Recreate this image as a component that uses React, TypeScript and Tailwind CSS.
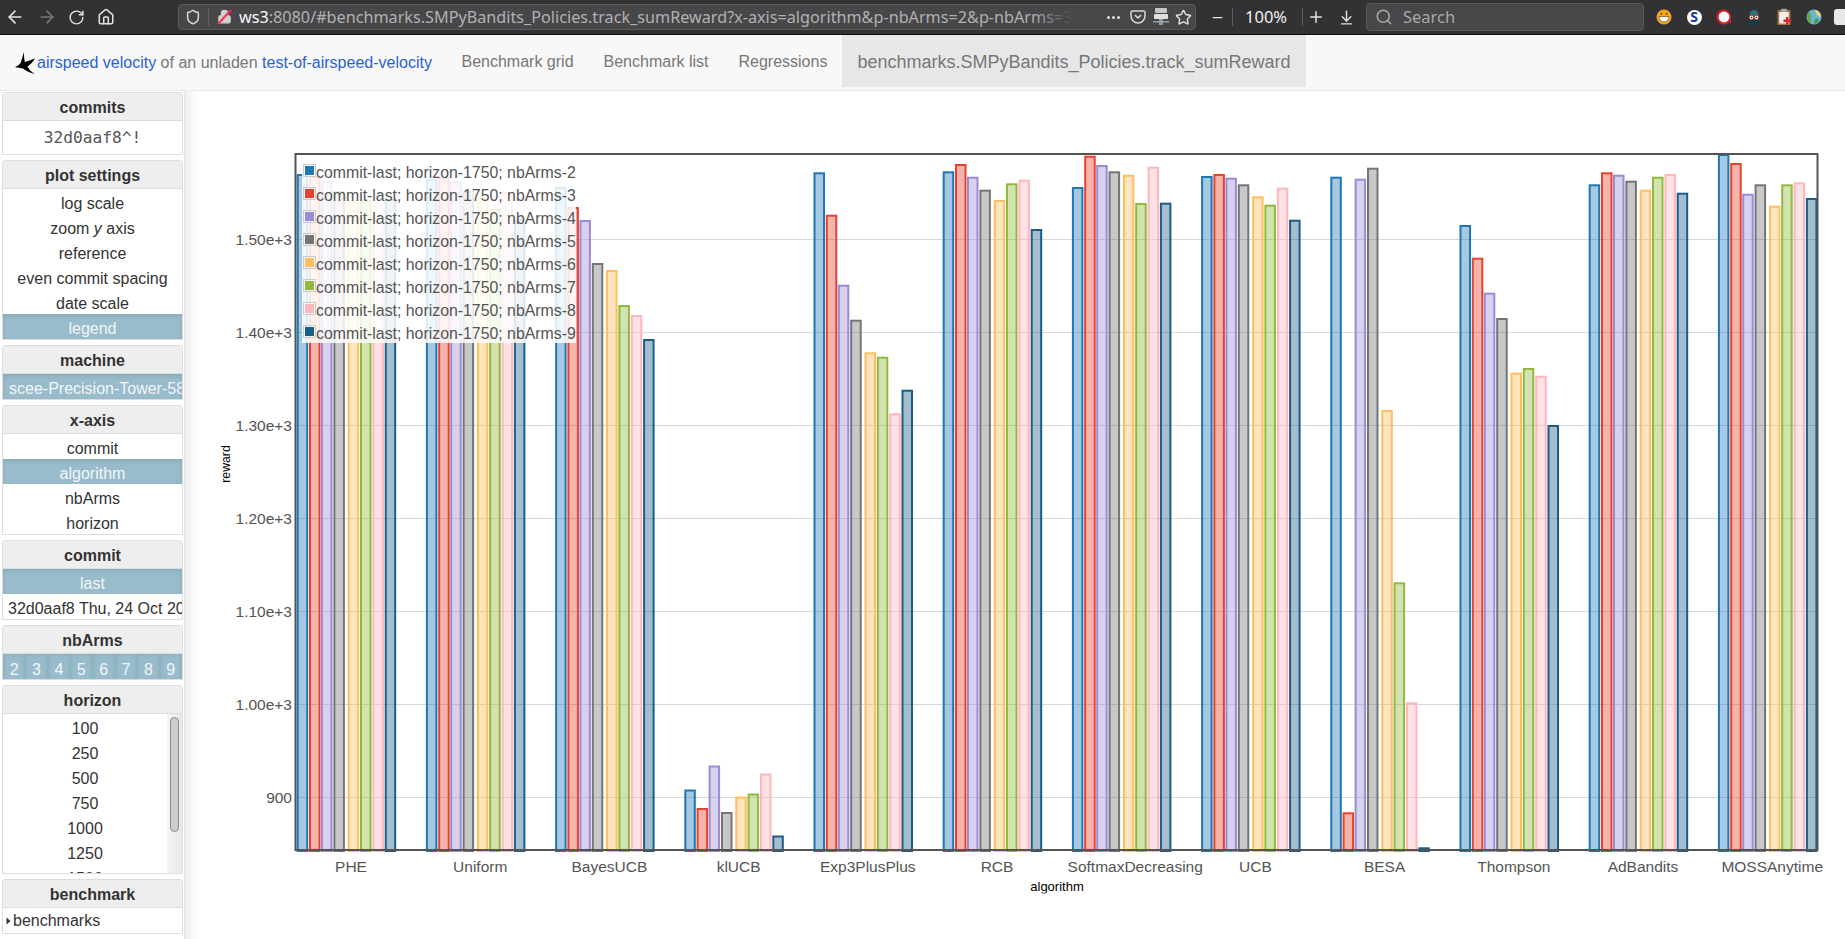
import React from "react";
import { ArrowLeft, ArrowRight, RotateCw, Home, Shield, Lock, Star, Minus, Plus, ArrowDownToLine, Search } from "lucide-react";

const COLORS = ["#1f77b4", "#e6432e", "#9b8bd4", "#757575", "#fdbf5f", "#8fba3d", "#ffb6bd", "#1b5d88"];
const OFFSETS = [0, 12.3, 24.3, 36.7, 51, 63.3, 75.7, 88];
const GROUPS: { name: string; tops: number[]; dx?: number }[] = [
  { name: "PHE", tops: [175, 177, 182, 192, 201, 201, 205.7, 200] },
  { name: "Uniform", tops: [180, 178, 182, 192, 198, 210, 193, 220] },
  { name: "BayesUCB", tops: [188, 208, 221, 264, 271, 306, 316, 340] },
  { name: "klUCB", tops: [790.5, 809, 766.5, 813, 797.5, 794.5, 774.5, 836.5] },
  { name: "Exp3PlusPlus", tops: [173.3, 215.7, 285.7, 320.7, 353.3, 357.7, 414.3, 390.7] },
  { name: "RCB", tops: [172.3, 165, 177.7, 190.7, 201, 184.3, 180.7, 230] },
  { name: "SoftmaxDecreasing", tops: [188, 156.7, 166, 172.3, 175.7, 204, 167.7, 203.7], dx: 9 },
  { name: "UCB", tops: [177, 175, 178.7, 185.3, 197.3, 205.7, 188.7, 220.7] },
  { name: "BESA", tops: [177.7, 813.3, 179.7, 168.7, 411, 583.3, 703.3, 848.3] },
  { name: "Thompson", tops: [226, 258.7, 293.7, 319, 373.7, 369, 376.7, 426] },
  { name: "AdBandits", tops: [185.3, 173.3, 175.7, 181.7, 190.7, 177.7, 175, 193.7] },
  { name: "MOSSAnytime", tops: [155, 164, 194.7, 185.3, 206.7, 185.3, 183.3, 199] },
];
const TICKS: [string, number][] = [
  ["1.50e+3", 239.5],
  ["1.40e+3", 332.5],
  ["1.30e+3", 425.5],
  ["1.20e+3", 518.5],
  ["1.10e+3", 611.5],
  ["1.00e+3", 704.5],
  ["900", 797.5],
];

function Panel({ title, children }: { title: string; children: React.ReactNode }) {
  return (
    <div className="border border-[#ddd] rounded-t-[3px] bg-white overflow-hidden shrink-0">
      <div className="box-border h-[28px] pt-[3px] border-b border-[#ddd] bg-[#eeeeee] flex items-center justify-center font-bold text-[#333] text-[16px]">
        {title}
      </div>
      {children}
    </div>
  );
}

function Item({ label, active }: { label: React.ReactNode; active?: boolean }) {
  return (
    <div
      className={
        active
          ? "box-border h-[25px] pt-[4px] flex items-center justify-center bg-[#98bccb] text-[#f2f6f8] shadow-[inset_0_2px_4px_rgba(0,0,0,0.1)] whitespace-nowrap overflow-hidden"
          : "box-border h-[25px] pt-[4px] flex items-center justify-center text-[#333] whitespace-nowrap overflow-hidden"
      }
    >
      {label}
    </div>
  );
}

function Bird() {
  return (
    <svg width="20" height="23" viewBox="0 0 20 23" className="shrink-0">
      <path
        d="M9 0 C9 4 9 7 10 10 C13 9 16 8 20 6.5 C18 10 15 13 12.5 14.5 C14 17 16 20 20 22 C15 21 11 19 8 16.5 C5.5 16 2.5 15.8 0 15 C3 14 5 12 6 10 C7 7 8 3 9 0 Z"
        fill="#000"
      />
    </svg>
  );
}

function ExtIcons() {
  return (
    <div className="flex items-center gap-[10px] ml-[10px] shrink-0">
      <svg width="20" height="20" viewBox="0 0 20 20">
        <circle cx="10" cy="10" r="7.5" fill="#f5a81c" />
        <path d="M5 9.5 H15 C15 13 13 15 10 15 C7 15 5 13 5 9.5 Z" fill="#fff" stroke="#7a4a08" strokeWidth="0.7" />
        <circle cx="7.3" cy="6.8" r="1" fill="#6b4105" />
        <circle cx="12.7" cy="6.8" r="1" fill="#6b4105" />
      </svg>
      <div className="w-[20px] h-[20px] flex items-center justify-center">
        <div className="w-[15px] h-[15px] rounded-full bg-white flex items-center justify-center text-[#0b3d91] text-[14px] font-bold leading-none">S</div>
      </div>
      <svg width="20" height="20" viewBox="0 0 20 20">
        <path d="M10 2.5 A7.5 7.5 0 1 0 15.5 15 L17 17 L17 10 A7.5 7.5 0 0 0 10 2.5 Z" fill="#d9201e" />
        <circle cx="10" cy="10" r="5.4" fill="#fff" />
      </svg>
      <svg width="20" height="20" viewBox="0 0 20 20">
        <path d="M3 18 C3 14 6 13 10 13 C14 13 17 14 17 18 Z" fill="#1b3a46" />
        <path d="M5.5 9 C5.5 5 7.5 3 10 3 C12.5 3 14.5 5 14.5 9 Z" fill="#2e6f7e" />
        <circle cx="7.5" cy="10.5" r="2.3" fill="#f2e7d8" stroke="#a8322a" strokeWidth="0.8" />
        <circle cx="12.5" cy="10.5" r="2.3" fill="#f2e7d8" stroke="#a8322a" strokeWidth="0.8" />
        <circle cx="7.5" cy="10.5" r="0.8" fill="#222" />
        <circle cx="12.5" cy="10.5" r="0.8" fill="#222" />
      </svg>
      <svg width="20" height="20" viewBox="0 0 20 20">
        <rect x="3.5" y="3" width="13" height="15" rx="1" fill="#a5733a" />
        <rect x="5.2" y="5" width="9.6" height="11.5" fill="#f4f1ea" />
        <rect x="7" y="1.8" width="6" height="3" rx="0.8" fill="#a8a8a8" />
        <path d="M12 10 h2.4 v2.6 h2.6 v2.4 h-2.6 v2.6 h-2.4 v-2.6 h-2.6 v-2.4 h2.6 Z" fill="#e3202e" />
      </svg>
      <svg width="20" height="20" viewBox="0 0 20 20">
        <circle cx="10" cy="10" r="7.5" fill="#62b6dc" />
        <path d="M4 6 C7 5 8 8 7 10 C6 13 8 15 7 17 C4 15 2 10 4 6 Z" fill="#6aa83c" />
        <path d="M11 3 C14 3 17 6 17 10 C15 10 13 8 12 7 Z" fill="#e9d26a" />
        <path d="M11 12 C13 11 15 12 15 14 C13 17 11 17 10 17 Z" fill="#4f9a3e" />
      </svg>
      <div className="w-[20px] h-[16px] rounded-[3px] bg-[#e8e8e8] shrink-0" />
    </div>
  );
}

function Toolbar() {
  return (
    <div className="box-border h-[35px] shrink-0 bg-[#323234] border-b border-[#0c0c0d] flex items-center overflow-hidden font-['Noto_Sans',sans-serif]">
      <div className="w-[178px] shrink-0 flex items-center">
        <ArrowLeft size={20} color="#e2e2e3" className="ml-[5px]" />
        <ArrowRight size={20} color="#77777a" className="ml-[12px]" />
        <RotateCw size={17} color="#e2e2e3" className="ml-[11px]" />
        <Home size={18} color="#e2e2e3" className="ml-[12px]" />
      </div>
      <div className="box-border w-[1018px] h-[26px] shrink-0 rounded-[4px] bg-[#474749] border border-[#5a5a5c] flex items-center relative">
        <Shield size={16} color="#d0d0d1" strokeWidth={2.4} className="ml-[6px] shrink-0" />
        <div className="w-px h-[18px] bg-[#5f5f61] ml-[7px] shrink-0" />
        <div className="relative ml-[8px] w-[16px] h-[16px] shrink-0">
          <Lock size={15} color="#d0d0d1" fill="#d0d0d1" />
          <svg width="16" height="16" viewBox="0 0 16 16" className="absolute left-0 top-0">
            <path d="M1 15 L14 1" stroke="#ff2d55" strokeWidth="2" />
          </svg>
        </div>
        <div className="ml-[6px] w-[834px] overflow-hidden whitespace-nowrap text-[16.2px] text-[#b1b1b3] relative shrink-0">
          <span className="text-[#f9f9fa]">ws3</span>:8080/#benchmarks.SMPyBandits_Policies.track_sumReward?x-axis=algorithm&amp;p-nbArms=2&amp;p-nbArms=3&amp;p-nbArms=4
          <div className="absolute right-0 top-0 bottom-0 w-[40px] bg-gradient-to-r from-transparent to-[#474749]" />
        </div>
        <div className="ml-auto flex items-center pr-[3px]">
          <div className="flex gap-[2px] mr-[10px]">
            <div className="w-[3px] h-[3px] rounded-full bg-[#e2e2e3]" />
            <div className="w-[3px] h-[3px] rounded-full bg-[#e2e2e3]" />
            <div className="w-[3px] h-[3px] rounded-full bg-[#e2e2e3]" />
          </div>
          <svg width="16" height="16" viewBox="0 0 16 16" className="mr-[6px]">
            <path d="M2.5 2 H13.5 Q15 2 15 3.5 V7 A7 7 0 0 1 1 7 V3.5 Q1 2 2.5 2 Z" fill="none" stroke="#d8d8d9" strokeWidth="1.5" />
            <path d="M5 6.2 L8 9 L11 6.2" fill="none" stroke="#d8d8d9" strokeWidth="1.6" />
          </svg>
          <svg width="18" height="20" viewBox="0 0 18 20" className="mr-[5px]">
            <rect x="3" y="1" width="12" height="5" rx="1" fill="#c8c8ca" />
            <rect x="2" y="7" width="14" height="5" rx="1" fill="#e0e0e2" />
            <rect x="1" y="14" width="16" height="1.6" fill="#7fa0b8" />
            <rect x="7" y="12" width="4" height="6" fill="#9a9a9c" />
          </svg>
          <Star size={17} color="#e2e2e3" />
        </div>
      </div>
      <Minus size={15} color="#e2e2e3" className="ml-[14px] shrink-0" />
      <div className="w-px h-[18px] bg-[#5f5f61] ml-[7px] shrink-0" />
      <div className="ml-[12px] text-[16.5px] text-[#f0f0f0] w-[45px] shrink-0 whitespace-nowrap">100%</div>
      <div className="w-px h-[18px] bg-[#5f5f61] ml-[12px] shrink-0" />
      <Plus size={18} color="#e2e2e3" className="ml-[4px] shrink-0" />
      <ArrowDownToLine size={17} color="#e2e2e3" className="ml-[13px] shrink-0" />
      <div className="box-border ml-[11px] w-[278px] h-[28px] shrink-0 rounded-[4px] bg-[#474749] border border-[#5a5a5c] flex items-center">
        <Search size={18} color="#a8a8aa" className="ml-[8px]" />
        <span className="ml-[10px] text-[16.5px] text-[#a8a8aa]">Search</span>
      </div>
      <ExtIcons />
    </div>
  );
}

function Nav() {
  return (
    <div className="box-border h-[56px] shrink-0 bg-[#f8f8f8] border-b border-[#e7e7e7] flex items-start text-[16px] text-[#777] overflow-hidden">
      <div className="w-[446.5px] h-[55px] shrink-0 flex items-center pl-[15px] pt-[1px]">
        <Bird />
        <span className="ml-[2px] whitespace-nowrap">
          <span className="text-[#2b5fd6]">airspeed velocity</span> of an unladen{" "}
          <span className="text-[#2b5fd6]">test-of-airspeed-velocity</span>
        </span>
      </div>
      <div className="box-border h-[52px] pt-[2px] px-[15px] flex items-center">Benchmark grid</div>
      <div className="box-border h-[52px] pt-[2px] px-[15px] flex items-center">Benchmark list</div>
      <div className="box-border h-[52px] pt-[2px] px-[15px] flex items-center">Regressions</div>
      <div className="box-border h-[52px] pt-[2px] px-[15px] flex items-center bg-[#e7e7e7] text-[18px]">benchmarks.SMPyBandits_Policies.track_sumReward</div>
    </div>
  );
}

function Sidebar() {
  return (
    <div className="box-border w-[185px] shrink-0 border-r border-[#e4e4e4] pt-[1px] pl-[2px] pr-[1px] flex flex-col gap-[5px] text-[16px] bg-white">
      <Panel title="commits">
        <div className="box-border h-[33px] pt-px flex items-center justify-center font-['DejaVu_Sans_Mono',monospace] text-[#555] text-[16.2px]">32d0aaf8^!</div>
      </Panel>
      <Panel title="plot settings">
        <Item label="log scale" />
        <Item label={<span>zoom <i>y</i> axis</span>} />
        <Item label="reference" />
        <Item label="even commit spacing" />
        <Item label="date scale" />
        <Item label="legend" active />
      </Panel>
      <Panel title="machine">
        <div className="box-border h-[25px] pt-[4px] flex items-center pl-[6px] bg-[#98bccb] text-[#f2f6f8] whitespace-nowrap overflow-hidden shadow-[inset_0_2px_4px_rgba(0,0,0,0.1)]">scee-Precision-Tower-5810</div>
      </Panel>
      <Panel title="x-axis">
        <Item label="commit" />
        <Item label="algorithm" active />
        <Item label="nbArms" />
        <Item label="horizon" />
      </Panel>
      <Panel title="commit">
        <Item label="last" active />
        <div className="box-border h-[25px] pt-[4px] flex items-center pl-[5px] text-[#333] whitespace-nowrap overflow-hidden">32d0aaf8 Thu, 24 Oct 2019</div>
      </Panel>
      <Panel title="nbArms">
        <div className="grid grid-cols-8 h-[25px]">
          {["2", "3", "4", "5", "6", "7", "8", "9"].map((n) => (
            <div key={n} className="box-border pt-[4px] flex items-center justify-center bg-[#98bccb] text-[#f2f6f8] shadow-[inset_0_0_4px_rgba(0,0,0,0.12)]">{n}</div>
          ))}
        </div>
      </Panel>
      <Panel title="horizon">
        <div className="h-[159px] flex overflow-hidden">
          <div className="flex-1 overflow-hidden">
            {["100", "250", "500", "750", "1000", "1250", "1500"].map((n) => (
              <Item key={n} label={n} />
            ))}
          </div>
          <div className="w-[15px] shrink-0 bg-gradient-to-r from-[#f4f4f4] to-[#e8e8e8] pt-[3px] flex justify-center">
            <div className="box-border w-[9px] h-[115px] rounded-[5px] bg-[#cdcdcd] border border-[#8a8a8a]" />
          </div>
        </div>
      </Panel>
      <Panel title="benchmark">
        <div className="h-[25px] flex items-center text-[#333] pl-[3px]">
          <svg width="5" height="8" viewBox="0 0 5 8" className="mr-[2px]"><path d="M0.5 0.5 L4.5 4 L0.5 7.5 Z" fill="#333" /></svg>
          benchmarks
        </div>
      </Panel>
    </div>
  );
}

function Chart() {
  return (
    <div className="flex-1 relative bg-white shadow-[inset_14px_0_12px_-10px_rgba(0,0,0,0.09)] overflow-hidden">
      <svg viewBox="185 91 1660 848" className="block w-[1660px] h-[848px]" style={{ fontFamily: "'Liberation Sans', Arial, sans-serif" }}>
        <defs>
          <clipPath id="labelclip"><rect x="900" y="870" width="300" height="23.5" /></clipPath>
        </defs>
        {TICKS.map(([t, y]) => (
          <line key={t} x1="296" x2="1817" y1={y} y2={y} stroke="#d8d8d8" strokeWidth="1" />
        ))}
        {GROUPS.map((g, i) => {
          const start = 296.7 + 129.2 * i;
          return g.tops.map((top, k) => (
            <rect
              key={g.name + k}
              x={start + OFFSETS[k] + 1}
              y={top}
              width={9.5}
              height={851 - top}
              fill={COLORS[k]}
              fillOpacity={0.4}
              stroke={COLORS[k]}
              strokeWidth={2}
            />
          ));
        })}
        <rect x="295.5" y="154" width="1522" height="696" fill="none" stroke="#545454" strokeWidth="2" />
        {TICKS.map(([t, y]) => (
          <text key={t} x="292" y={y + 5.5} textAnchor="end" fontSize="15.5" fill="#545454">{t}</text>
        ))}
        {GROUPS.map((g, i) => (
          <text key={g.name} x={351 + 129.2 * i + (g.dx ?? 0)} y="872" textAnchor="middle" fontSize="15.5" fill="#545454">{g.name}</text>
        ))}
        <text transform="translate(230 464) rotate(-90)" textAnchor="middle" fontSize="12.3" fill="#000">reward</text>
        <g clipPath="url(#labelclip)">
          <text x="1057" y="891" textAnchor="middle" fontSize="13" fill="#000">algorithm</text>
        </g>
      </svg>
      <div className="absolute left-[117px] top-[72px] w-[274px] h-[180px] bg-white/85">
        <div className="flex flex-col -mt-[2px]">
          {COLORS.map((c, i) => (
            <div key={c} className="h-[23px] flex items-center pl-[1px] text-[15.85px] text-[#545454] whitespace-nowrap">
              <div className="box-border w-[13px] h-[13px] border border-[#ccc] p-px mb-[4px] shrink-0">
                <div className="w-full h-full" style={{ backgroundColor: c }} />
              </div>
              commit-last; horizon-1750; nbArms-{i + 2}
            </div>
          ))}
        </div>
      </div>
    </div>
  );
}

export default function App() {
  return (
    <div className="w-[1845px] h-[939px] overflow-hidden flex flex-col bg-white font-['Liberation_Sans',Arial,sans-serif]">
      <Toolbar />
      <Nav />
      <div className="flex flex-1 min-h-0">
        <Sidebar />
        <Chart />
      </div>
    </div>
  );
}
